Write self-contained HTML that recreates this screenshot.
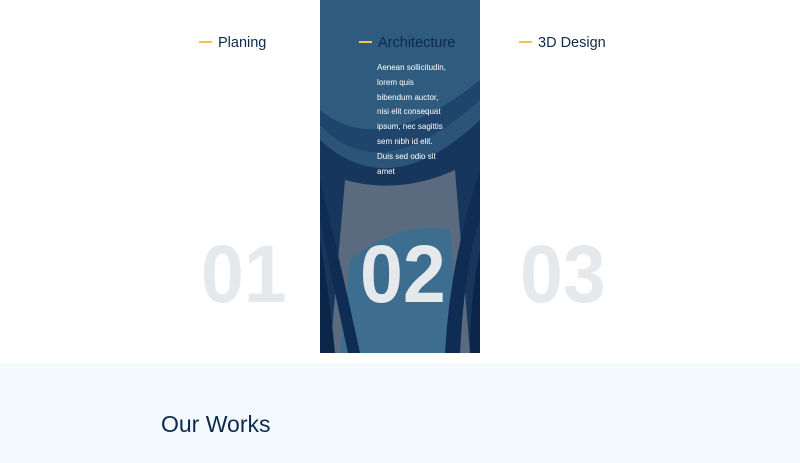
<!DOCTYPE html>
<html><head><meta charset="utf-8"><style>
html,body{margin:0;padding:0;width:800px;height:463px;overflow:hidden;background:#fff;font-family:"Liberation Sans",sans-serif}
.panel{position:absolute;left:320px;top:0;width:160px;height:353px;overflow:hidden;background:#2f5c7e}
.t{position:absolute;top:35px;font-size:14.5px;color:#0d2a4a;white-space:nowrap}
.t i{display:inline-block;width:13px;height:2px;background:#f2c44d;vertical-align:middle;margin-right:6px;position:relative;top:-1px}
.n{position:absolute;top:225px;font-size:82px;font-weight:bold;color:#e6e9ec;letter-spacing:0;line-height:100px;transform:scaleX(0.94);transform-origin:0 0}
.p{position:absolute;left:377px;top:61px;width:72px;font-size:8px;line-height:14.8px;color:#fff}
.bot{position:absolute;left:0;top:363px;width:800px;height:100px;background:#f4f9fd}
.h{position:absolute;left:161px;top:411px;font-size:23px;color:#0d2a4a}
</style></head><body>
<div class="panel"><svg width="160" height="353" viewBox="0 0 160 353">
<rect width="160" height="353" fill="#2f5c7e"/>
<path d="M0 110 Q60 160 160 80 L160 353 L0 353Z" fill="#1f456c"/>
<path d="M0 125 Q60 190 160 100 L160 353 L0 353Z" fill="#2c5378"/>
<path d="M0 140 Q70 205 160 120 L160 353 L0 353Z" fill="#16365c"/>
<path d="M25 180 Q80 195 135 170 L150 353 L10 353Z" fill="#5a6b80"/>
<path d="M30 260 Q80 220 130 230 L140 353 L20 353Z" fill="#3d6e8f"/>
<path d="M0 180 Q20 260 40 353 L28 353 Q10 270 0 220Z" fill="#0f2d52"/>
<path d="M0 240 Q10 300 15 353 L0 353Z" fill="#0c2649"/>
<path d="M160 170 Q130 260 125 353 L140 353 Q145 260 160 220Z" fill="#0f2d52"/>
<path d="M160 250 Q150 300 150 353 L160 353Z" fill="#0b2447"/>
</svg></div>
<div class="t" style="left:199px"><i></i>Planing</div>
<div class="t" style="left:359px"><i></i>Architecture</div>
<div class="t" style="left:519px"><i></i>3D Design</div>
<div class="p">Aenean sollicitudin, lorem quis bibendum auctor, nisi elit consequat ipsum, nec sagittis sem nibh id elit. Duis sed odio sit amet</div>
<div class="n" style="left:201px">01</div>
<div class="n" style="left:360px">02</div>
<div class="n" style="left:520px">03</div>
<div class="bot"></div>
<div class="h">Our Works</div>
</body></html>
